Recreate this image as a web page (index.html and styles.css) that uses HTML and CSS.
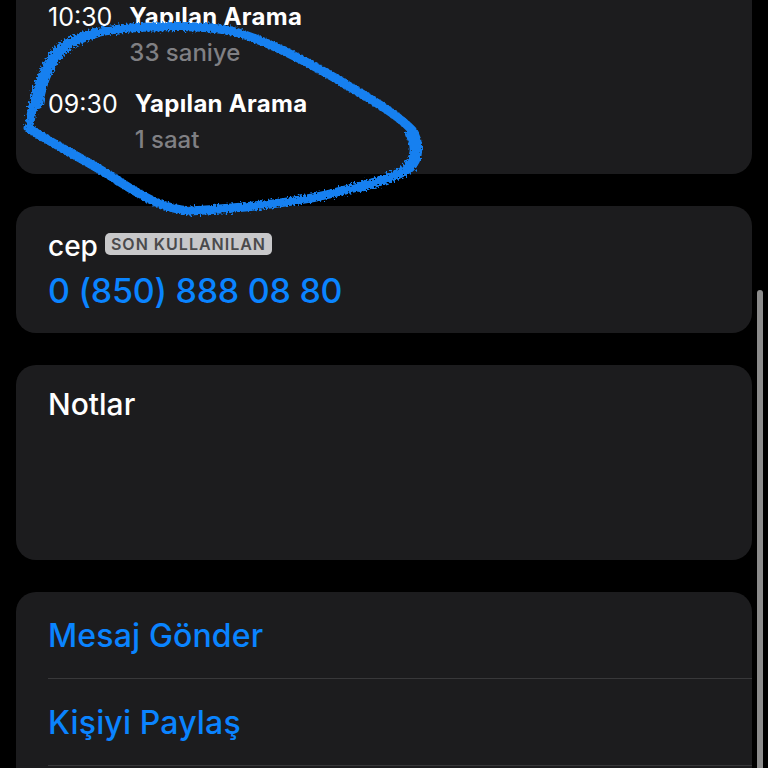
FILE: index.html
```html
<!DOCTYPE html>
<html lang="tr">
<head>
  <meta charset="UTF-8">
  <meta name="viewport" content="width=device-width, initial-scale=1.0">
  <title>Kişi</title>
  <link rel="stylesheet" href="styles.css">
</head>
<body>
  <main class="screen">
    <section class="card card-calls">
      <div class="call">
        <span class="call-time">10:30</span>
        <div class="call-info">
          <div class="call-title">Yapılan Arama</div>
          <div class="call-length">33 saniye</div>
        </div>
      </div>
      <div class="call">
        <span class="call-time">09:30</span>
        <div class="call-info">
          <div class="call-title">Yapılan Arama</div>
          <div class="call-length">1 saat</div>
        </div>
      </div>
    </section>

    <section class="card card-phone">
      <div class="phone-label">
        <span>cep</span>
        <span class="badge">SON KULLANILAN</span>
      </div>
      <div class="phone-number">0 (850) 888 08 80</div>
    </section>

    <section class="card card-notes">Notlar</section>

    <section class="card card-actions">
      <div class="action">Mesaj Gönder</div>
      <div class="action">Kişiyi Paylaş</div>
    </section>
  </main>

  <div class="scrollbar"></div>

  <!-- hand drawn circle over the two calls -->
  <svg class="scribble" width="768" height="240" viewBox="0 0 768 240" fill="none">
    <defs>
      <filter id="rough" x="-5%" y="-5%" width="110%" height="110%">
        <feTurbulence type="fractalNoise" baseFrequency="0.5" numOctaves="3" seed="4"/>
        <feDisplacementMap in="SourceGraphic" scale="7"/>
        <feGaussianBlur stdDeviation="0.5"/>
      </filter>
    </defs>
    <g filter="url(#rough)" stroke="#1680f0" stroke-linecap="round" stroke-linejoin="round">
      <path stroke-width="9" d="M30 122 C34 95 42 70 56 52 C72 36 100 30 130 28 C165 26 200 25 232 31 C265 40 300 58 335 78 C365 96 395 112 412 130 C420 142 420 158 410 168 C392 180 360 186 330 194 C290 204 240 208 190 211 C165 209 145 198 120 182 C95 165 60 148 28 128"/>
      <path stroke-width="10" d="M38 104 C42 82 50 62 62 50 C72 42 84 36 96 33 M410 134 C417 146 417 158 404 171 C390 179 374 183 360 187"/>
    </g>
  </svg>
</body>
</html>
```

FILE: styles.css
```css
html, body {
  margin: 0;
  height: 100%;
  background-color: #000;
  overflow: hidden;
}
body {
  font-family: 'Inter', 'Liberation Sans', sans-serif;
  color: #fff;
}
.screen {
  width: 736px;
  height: 768px;
  margin-left: 16px;
  display: flex;
  flex-direction: column;
  gap: 32px;
  overflow: hidden;
}
.card {
  flex-shrink: 0;
  box-sizing: border-box;
  background-color: #1c1c1e;
  border-radius: 20px;
  padding-left: 32px;
}
.card-calls {
  height: 174px;
  padding-top: 1px;
  border-radius: 0 0 20px 20px;
  display: flex;
  flex-direction: column;
}
.call {
  height: 88px;
  display: flex;
  gap: 17px;
}
.call-time {
  font-size: 25px;
  line-height: 32px;
}
.call-title {
  font-size: 24px;
  line-height: 32px;
  font-weight: 700;
  letter-spacing: 0.3px;
}
.call-length {
  font-size: 24px;
  line-height: 32px;
  margin-top: 4px;
  font-weight: 500;
  color: #808084;
}
.card-phone {
  height: 127px;
  padding-top: 23px;
}
.phone-label {
  display: flex;
  gap: 7px;
  font-size: 28px;
  line-height: 34px;
  font-weight: 500;
}
.badge {
  align-self: flex-start;
  margin-top: 4px;
  padding: 0 6px;
  font-size: 16px;
  line-height: 22px;
  font-weight: 600;
  letter-spacing: 1px;
  color: #4a4a4c;
  background-color: #c8c8ca;
  border-radius: 5px;
}
.phone-number {
  margin-top: 7px;
  font-size: 34px;
  line-height: 42px;
  font-weight: 500;
  letter-spacing: -0.25px;
  color: #0a84ff;
}
.card-notes {
  height: 195px;
  padding-top: 21px;
  font-size: 30px;
  line-height: 36px;
  font-weight: 500;
}
.card-actions {
  height: 200px;
}
.action {
  height: 87px;
  box-sizing: border-box;
  padding-top: 24px;
  font-size: 32px;
  line-height: 40px;
  font-weight: 500;
  letter-spacing: 0.15px;
  color: #0a84ff;
  border-bottom: 1px solid #38383a;
}
.scrollbar {
  position: absolute;
  left: 757px;
  top: 290px;
  bottom: 0;
  width: 6px;
  background-color: #8c8c8c;
  border-radius: 3px 3px 0 0;
}
.scribble {
  position: absolute;
  left: 0;
  top: 0;
  pointer-events: none;
}
```
